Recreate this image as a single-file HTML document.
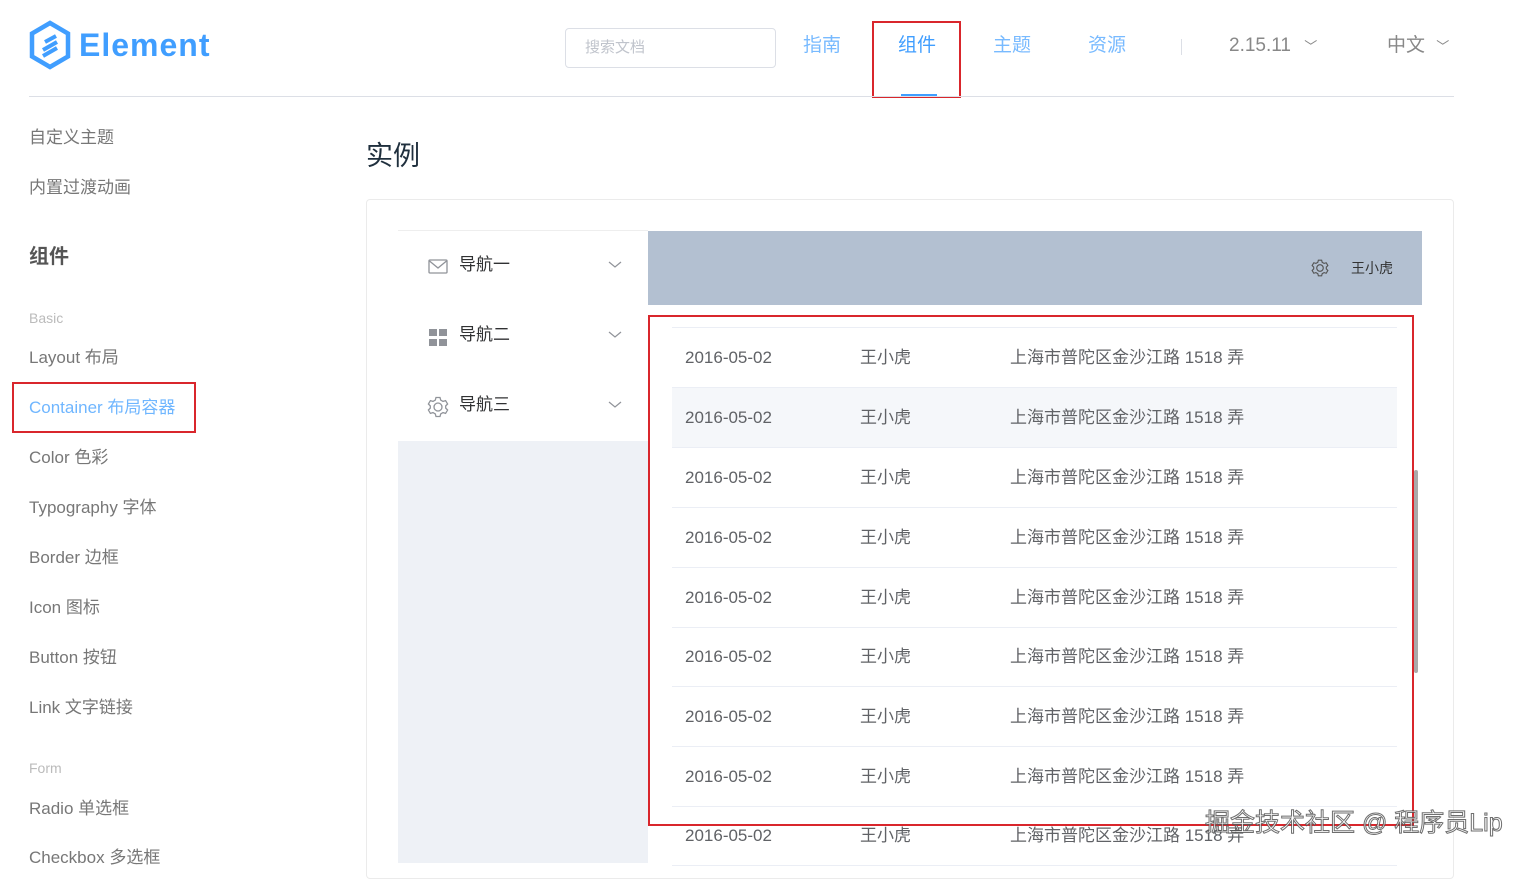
<!DOCTYPE html>
<html><head><meta charset="utf-8"><style>
*{margin:0;padding:0;box-sizing:border-box}
body{width:1527px;height:863px;overflow:hidden;background:#fff;font-family:"Liberation Sans","Noto Sans CJK SC",sans-serif;position:relative;color:#606266}
.a{position:absolute;white-space:nowrap;line-height:1.2}
.side{font-size:17px;color:#777}
.row{position:absolute;left:672px;width:725px;height:60px;border-bottom:1px solid #ebeef5;font-size:17px;color:#606266}
.row span{position:absolute;top:0;height:59px;line-height:59px}
</style></head><body>
<svg class="a" style="left:28px;top:20px" width="44" height="50" viewBox="0 0 44 50"><path d="M22 3 L40 13.5 V36.5 L22 47 L4 36.5 V13.5 Z" fill="none" stroke="#409eff" stroke-width="4.5"/><path d="M15 30 L29 22 M15 36 L29 28 M17 22 L28 16" stroke="#409eff" stroke-width="4" fill="none"/></svg>
<div class="a" style="left:79px;top:26px;font-size:32px;font-weight:bold;color:#409eff;letter-spacing:1px">Element</div>
<div class="a" style="left:565px;top:28px;width:211px;height:40px;border:1px solid #dcdfe6;border-radius:4px;font-size:15px;color:#c0c4cc;padding:10px 19px">搜索文档</div>
<div class="a" style="left:803px;top:35px;font-size:19px;color:#409eff;opacity:.7">指南</div>
<div class="a" style="left:898px;top:35px;font-size:19px;color:#409eff">组件</div>
<div class="a" style="left:901px;top:94px;width:36px;height:2px;background:#409eff"></div>
<div class="a" style="left:993px;top:35px;font-size:19px;color:#409eff;opacity:.7">主题</div>
<div class="a" style="left:1088px;top:35px;font-size:19px;color:#409eff;opacity:.7">资源</div>
<div class="a" style="left:1181px;top:39px;width:1px;height:16px;background:#dcdfe6"></div>
<div class="a" style="left:1229px;top:35px;font-size:19px;color:#888">2.15.11 <span style="font-size:13px;margin-left:8px">﹀</span></div>
<div class="a" style="left:1387px;top:35px;font-size:19px;color:#888">中文 <span style="font-size:13px;margin-left:6px">﹀</span></div>
<div class="a" style="left:872px;top:21px;width:89px;height:77px;border:2px solid #d9262c"></div>
<div class="a" style="left:29px;top:96px;width:1425px;height:1px;background:#dcdfe6"></div>

<div class="a side" style="left:29px;top:128px">自定义主题</div>
<div class="a side" style="left:29px;top:178px">内置过渡动画</div>
<div class="a" style="left:29px;top:245px;font-size:20px;font-weight:bold;color:#555">组件</div>
<div class="a" style="left:29px;top:310px;font-size:14px;color:#bbb">Basic</div>
<div class="a side" style="left:29px;top:348px">Layout 布局</div>
<div class="a side" style="left:29px;top:398px;color:#409eff;opacity:.75">Container 布局容器</div>
<div class="a" style="left:12px;top:382px;width:184px;height:51px;border:2px solid #d9262c"></div>
<div class="a side" style="left:29px;top:448px">Color 色彩</div>
<div class="a side" style="left:29px;top:498px">Typography 字体</div>
<div class="a side" style="left:29px;top:548px">Border 边框</div>
<div class="a side" style="left:29px;top:598px">Icon 图标</div>
<div class="a side" style="left:29px;top:648px">Button 按钮</div>
<div class="a side" style="left:29px;top:698px">Link 文字链接</div>
<div class="a" style="left:29px;top:760px;font-size:14px;color:#bbb">Form</div>
<div class="a side" style="left:29px;top:799px">Radio 单选框</div>
<div class="a side" style="left:29px;top:848px">Checkbox 多选框</div>

<div class="a" style="left:366px;top:140px;font-size:27px;color:#1f2f3d">实例</div>
<div class="a" style="left:366px;top:199px;width:1088px;height:680px;border:1px solid #ebebeb;border-radius:4px"></div>

<div class="a" style="left:398px;top:230px;width:250px;height:633px;background:#eef1f6"></div>
<div class="a" style="left:398px;top:230px;width:250px;height:211px;background:#fff;border-top:1px solid #eee"></div>
<svg class="a" style="left:428px;top:258px" width="20" height="18"><rect x="1" y="2" width="18" height="13" rx="1" fill="none" stroke="#909399" stroke-width="1.3"/><path d="M1.5 3 L10 10 L18.5 3" fill="none" stroke="#909399" stroke-width="1.3"/></svg>
<svg class="a" style="left:429px;top:329px" width="18" height="18"><rect x="0" y="0" width="8" height="7" fill="#909399"/><rect x="10" y="0" width="8" height="7" fill="#909399"/><rect x="0" y="10" width="8" height="7" fill="#909399"/><rect x="10" y="10" width="8" height="7" fill="#909399"/></svg>
<svg class="a" style="left:427px;top:396px" width="22" height="22" viewBox="0 0 22 22"><circle cx="11" cy="11" r="4" fill="none" stroke="#909399" stroke-width="1.3"/><path d="M9 1.5h4l.7 2.6 2.3 1.3 2.6-.8 2 3.4-1.9 1.9v2.2l1.9 1.9-2 3.4-2.6-.8-2.3 1.3-.7 2.6h-4l-.7-2.6-2.3-1.3-2.6.8-2-3.4 1.9-1.9v-2.2l-1.9-1.9 2-3.4 2.6.8 2.3-1.3z" fill="none" stroke="#909399" stroke-width="1.3"/></svg>
<div class="a" style="left:459px;top:255px;font-size:17px;color:#303133">导航一</div>
<div class="a" style="left:459px;top:325px;font-size:17px;color:#303133">导航二</div>
<div class="a" style="left:459px;top:395px;font-size:17px;color:#303133">导航三</div>
<svg class="a" style="left:608px;top:261px" width="14" height="8"><path d="M1 1 L7 6 L13 1" fill="none" stroke="#909399" stroke-width="1.2"/></svg>
<svg class="a" style="left:608px;top:331px" width="14" height="8"><path d="M1 1 L7 6 L13 1" fill="none" stroke="#909399" stroke-width="1.2"/></svg>
<svg class="a" style="left:608px;top:401px" width="14" height="8"><path d="M1 1 L7 6 L13 1" fill="none" stroke="#909399" stroke-width="1.2"/></svg>

<div class="a" style="left:648px;top:231px;width:774px;height:74px;background:#b3c0d1"></div>
<svg class="a" style="left:1311px;top:259px" width="18" height="18" viewBox="0 0 22 22"><circle cx="11" cy="11" r="4" fill="none" stroke="#555" stroke-width="1.4"/><path d="M9 1.5h4l.7 2.6 2.3 1.3 2.6-.8 2 3.4-1.9 1.9v2.2l1.9 1.9-2 3.4-2.6-.8-2.3 1.3-.7 2.6h-4l-.7-2.6-2.3-1.3-2.6.8-2-3.4 1.9-1.9v-2.2l-1.9-1.9 2-3.4 2.6.8 2.3-1.3z" fill="none" stroke="#555" stroke-width="1.4"/></svg>
<div class="a" style="left:1351px;top:260px;font-size:14px;color:#333">王小虎</div>

<div class="a" style="left:672px;top:327px;width:725px;height:1px;background:#ebeef5"></div>
<div class="row" style="top:328px"><span style="left:13px">2016-05-02</span><span style="left:188px">王小虎</span><span style="left:338px">上海市普陀区金沙江路 1518 弄</span></div>
<div class="row" style="top:388px;background:#f5f7fa"><span style="left:13px">2016-05-02</span><span style="left:188px">王小虎</span><span style="left:338px">上海市普陀区金沙江路 1518 弄</span></div>
<div class="row" style="top:448px"><span style="left:13px">2016-05-02</span><span style="left:188px">王小虎</span><span style="left:338px">上海市普陀区金沙江路 1518 弄</span></div>
<div class="row" style="top:508px"><span style="left:13px">2016-05-02</span><span style="left:188px">王小虎</span><span style="left:338px">上海市普陀区金沙江路 1518 弄</span></div>
<div class="row" style="top:568px"><span style="left:13px">2016-05-02</span><span style="left:188px">王小虎</span><span style="left:338px">上海市普陀区金沙江路 1518 弄</span></div>
<div class="row" style="top:627px"><span style="left:13px">2016-05-02</span><span style="left:188px">王小虎</span><span style="left:338px">上海市普陀区金沙江路 1518 弄</span></div>
<div class="row" style="top:687px"><span style="left:13px">2016-05-02</span><span style="left:188px">王小虎</span><span style="left:338px">上海市普陀区金沙江路 1518 弄</span></div>
<div class="row" style="top:747px"><span style="left:13px">2016-05-02</span><span style="left:188px">王小虎</span><span style="left:338px">上海市普陀区金沙江路 1518 弄</span></div>
<div class="row" style="top:806px"><span style="left:13px">2016-05-02</span><span style="left:188px">王小虎</span><span style="left:338px">上海市普陀区金沙江路 1518 弄</span></div>
<div class="a" style="left:1414px;top:470px;width:4px;height:203px;background:#aaa;border-radius:2px"></div>
<div class="a" style="left:648px;top:315px;width:766px;height:511px;border:2px solid #d9262c"></div>
<div class="a" style="left:1205px;top:808px;font-size:25px;color:#fff;-webkit-text-stroke:1px #555;opacity:.85">掘金技术社区 @ 程序员Lip</div>
</body></html>
